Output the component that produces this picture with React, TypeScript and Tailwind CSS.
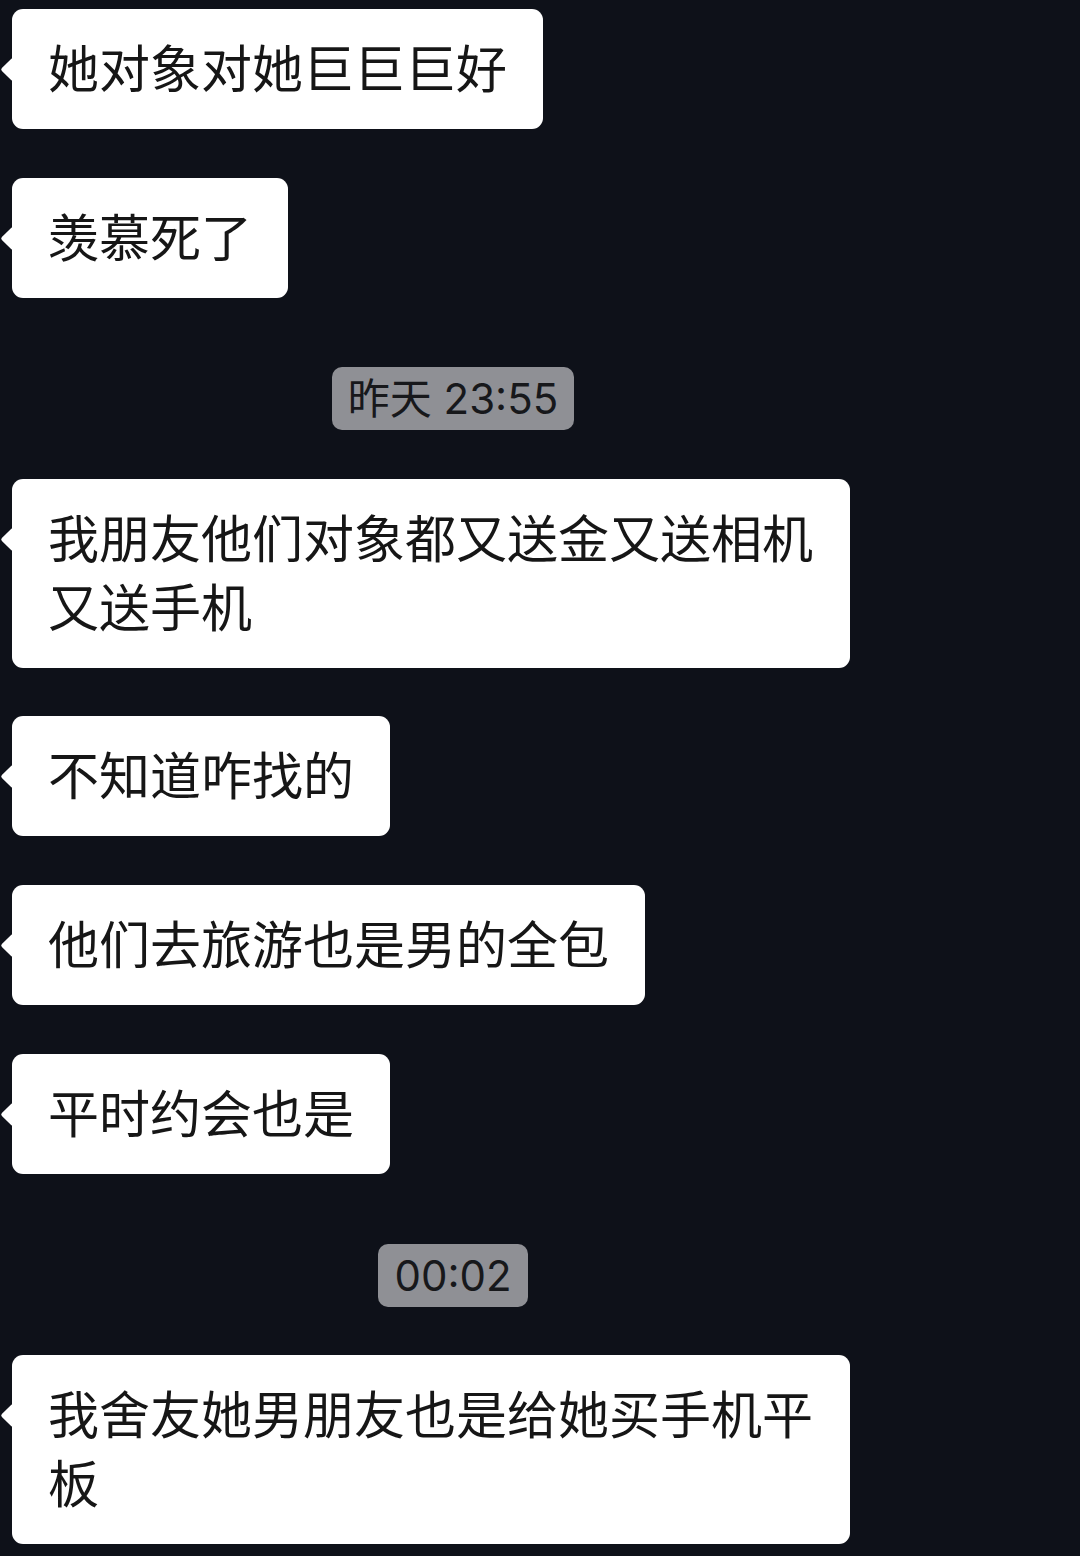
import React from "react";

type Item =
  | { kind: "msg"; text: string; mt: number }
  | { kind: "time"; text: string; mt: number };

const items: Item[] = [
  { kind: "msg", text: "她对象对她巨巨巨好", mt: 9 },
  { kind: "msg", text: "羡慕死了", mt: 49 },
  { kind: "time", text: "昨天 23:55", mt: 69 },
  { kind: "msg", text: "我朋友他们对象都又送金又送相机又送手机", mt: 49 },
  { kind: "msg", text: "不知道咋找的", mt: 48 },
  { kind: "msg", text: "他们去旅游也是男的全包", mt: 49 },
  { kind: "msg", text: "平时约会也是", mt: 49 },
  { kind: "time", text: "00:02", mt: 70 },
  { kind: "msg", text: "我舍友她男朋友也是给她买手机平板", mt: 48 },
];

function Bubble({ text, mt }: { text: string; mt: number }) {
  return (
    <div className="flex pl-[12px]" style={{ marginTop: mt }}>
      <div className="relative max-w-[838px] rounded-[11px] bg-white pl-[36px] pr-[36px] pt-[26px] pb-[25px] text-[51px] leading-[69px] text-[#161616]">
        <div className="absolute left-[-8px] top-[52px] h-[17px] w-[17px] rotate-45 rounded-[2px] bg-white" />
        <span className="relative">{text}</span>
      </div>
    </div>
  );
}

function TimePill({ text, mt }: { text: string; mt: number }) {
  return (
    <div className="flex w-[906px] justify-center" style={{ marginTop: mt }}>
      <div className="flex h-[63px] items-center rounded-[10px] bg-[#8f9095] px-[16px] text-[42px] leading-none text-[#17181b]">
        {text}
      </div>
    </div>
  );
}

export default function App() {
  return (
    <div
      className="flex min-h-[1556px] w-[1080px] flex-col bg-[#0e1119] overflow-hidden"
      style={{ fontFamily: 'Inter, "Noto Sans CJK SC", sans-serif' }}
    >
      {items.map((it, i) =>
        it.kind === "msg" ? (
          <Bubble key={i} text={it.text} mt={it.mt} />
        ) : (
          <TimePill key={i} text={it.text} mt={it.mt} />
        )
      )}
    </div>
  );
}
